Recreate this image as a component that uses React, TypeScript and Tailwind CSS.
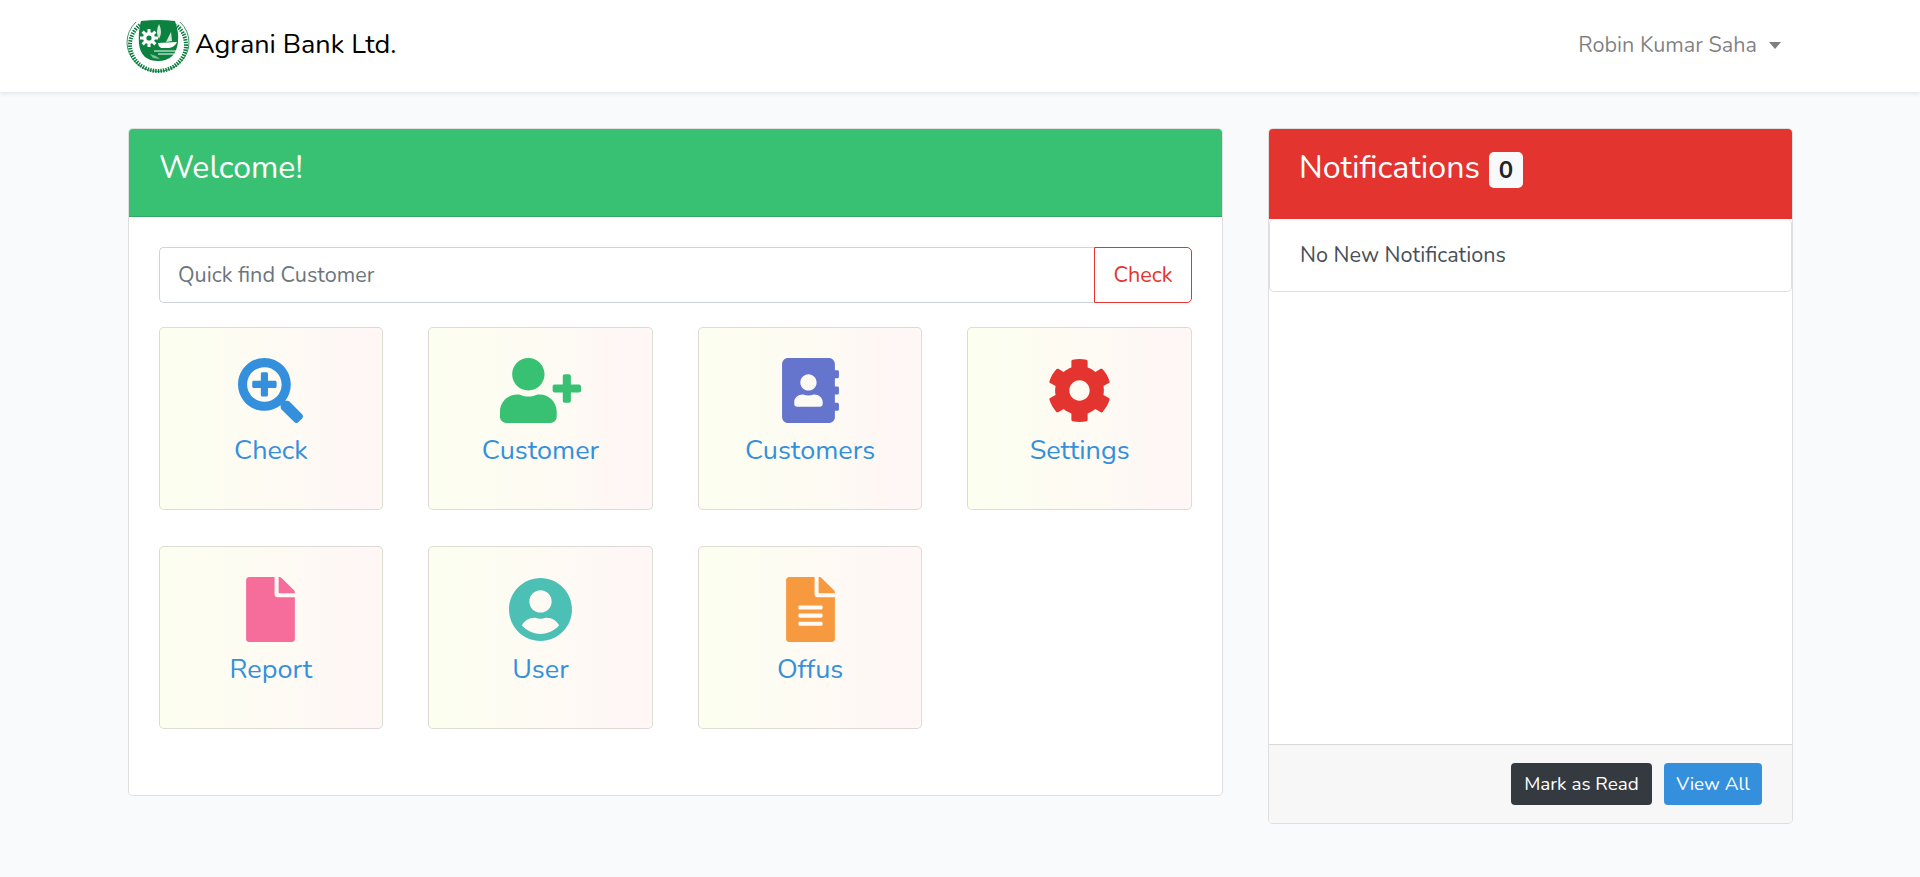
import React from "react";
import { FaSearchPlus, FaUserPlus, FaAddressBook, FaCog, FaFile, FaUserCircle, FaFileAlt } from "react-icons/fa";

function Logo() {
  return (
    <svg width="60" height="54" viewBox="0 0 60 54" className="shrink-0 overflow-visible">
      <path d="M12 7 A28 26 0 1 0 48 7" fill="none" stroke="#0b7d3e" strokeWidth="4" strokeDasharray="1.5 1.1" />
      <path d="M8 4 A31 29 0 1 0 52 4" fill="none" stroke="#0b7d3e" strokeWidth="0.8" />
      <path d="M13 3 Q30 1 47 3 Q51 14 50 24 Q48 43 30 43 Q13 43 11 26 Q10 13 13 3 Z" fill="#0d8240" />
      <g fill="#ffffff">
        <circle cx="21" cy="20" r="6" />
        <rect x="19.5" y="11" width="3" height="18" />
        <rect x="12" y="18.5" width="18" height="3" />
        <rect x="19.5" y="11" width="3" height="18" transform="rotate(45 21 20)" />
        <rect x="19.5" y="11" width="3" height="18" transform="rotate(-45 21 20)" />
      </g>
      <circle cx="21" cy="20" r="2.6" fill="#0d8240" />
      <path d="M31 6 Q35 14 31 21 Q27 14 31 6 Z" fill="#d5ead9" />
      <path d="M30 25 L49 24 Q47 29 41 30 L33 30 Q30 28 30 25 Z" fill="#ffffff" />
      <path d="M38 24 L43 14 L44 23 Z" fill="#d5ead9" />
      <path d="M26 33 H48 M30 36 H46" stroke="#ffffff" strokeWidth="1" />
      <path d="M22 36 l6 2 l4 3 l-7 -1 z" fill="#7fbf97" />
    </svg>
  );
}

const tiles = [
  { label: "Check", Icon: FaSearchPlus, color: "text-[#3490dc] w-[65px] h-[65px]" },
  { label: "Customer", Icon: FaUserPlus, color: "text-[#38c172] w-[81px] h-[65px]" },
  { label: "Customers", Icon: FaAddressBook, color: "text-[#6574cd] w-[65px] h-[65px]" },
  { label: "Settings", Icon: FaCog, color: "text-[#e3342f] w-[65px] h-[65px]" },
  { label: "Report", Icon: FaFile, color: "text-[#f66d9b] w-[65px] h-[65px]" },
  { label: "User", Icon: FaUserCircle, color: "text-[#4dc0b5] w-[65px] h-[65px]" },
  { label: "Offus", Icon: FaFileAlt, color: "text-[#f6993f] w-[65px] h-[65px]" },
];

export default function App() {
  return (
    <div className="min-h-[877px] bg-[#f8fafc] font-['Nunito','Lato','Noto_Sans',sans-serif] text-[18px] text-[#212529]">
      <nav className="h-[92px] bg-white shadow-[0_2px_4px_rgba(0,0,0,0.08)] pl-[128px] pr-[128px] flex items-center justify-between">
        <div className="flex items-center gap-[7px] pb-[2px]">
          <Logo />
          <span className="text-[27px] text-black">Agrani Bank Ltd.</span>
        </div>
        <div className="flex items-center gap-[12px] pr-[11px] text-[21.6px] text-[#00000080] -mt-[1px]">
          <span>Robin Kumar Saha</span>
          <span className="w-0 h-0 border-t-[7px] border-t-[#00000080] border-x-[6px] border-x-transparent" />
        </div>
      </nav>

      <main className="flex items-start gap-[45px] pl-[128px] pr-[127px] pt-[36px]">
        <section className="w-[1095px] h-[668px] bg-white border border-[#00000020] rounded-[5px] overflow-hidden">
          <header className="h-[88px] bg-[#38c172] border-b border-[#00000020] px-[30px] pt-[15px] text-[32px] text-white">
            Welcome!
          </header>
          <div className="px-[30px] pt-[30px]">
            <div className="flex h-[56px]">
              <div className="flex-1 border border-[#ced4da] border-r-0 rounded-l-[5px] px-[18px] flex items-center text-[21.6px] text-[#6c757d]">
                Quick find Customer
              </div>
              <button className="w-[98px] border border-[#e3342f] rounded-r-[5px] text-[21.6px] text-[#e3342f]">Check</button>
            </div>
            <div className="grid grid-cols-4 gap-x-[45px] gap-y-[36px] mt-[24px] -ml-[0.4px]">
              {tiles.map(({ label, Icon, color }) => (
                <div
                  key={label}
                  className="h-[183px] border border-[#00000020] rounded-[5px] bg-gradient-to-r from-[#fcfff0] to-[#fff6f6] flex flex-col items-center pt-[30px]"
                >
                  <Icon className={color} />
                  <span className="mt-[8px] text-[27px] leading-[40px] text-[#3490dc]">{label}</span>
                </div>
              ))}
            </div>
          </div>
        </section>

        <aside className="w-[525px] h-[696px] bg-white border border-[#00000020] rounded-[5px] overflow-hidden flex flex-col">
          <header className="h-[90px] shrink-0 bg-[#e3342f] px-[30px] pt-[14px] flex items-start text-[32.2px] text-white">
            <span>Notifications</span>
            <span className="ml-[9px] mt-[9px] w-[34px] h-[36px] rounded-[5px] bg-[#f8f9fa] text-[#212529] text-[24px] font-bold flex items-center justify-center">
              0
            </span>
          </header>
          <div className="h-[73px] shrink-0 border border-t-0 border-[#00000020] rounded-[5px] px-[30px] flex items-center text-[21.6px] text-[#495057]">
            No New Notifications
          </div>
          <footer className="mt-auto h-[79px] shrink-0 bg-[#f7f7f7] border-t border-[#00000020] flex items-start justify-end gap-[12px] pt-[18px] pr-[30px]">
            <button className="w-[141px] h-[42px] rounded-[4px] bg-[#343a40] text-white text-[18.9px]">Mark as Read</button>
            <button className="w-[98px] h-[42px] rounded-[4px] bg-[#3490dc] text-white text-[18.9px]">View All</button>
          </footer>
        </aside>
      </main>
    </div>
  );
}
